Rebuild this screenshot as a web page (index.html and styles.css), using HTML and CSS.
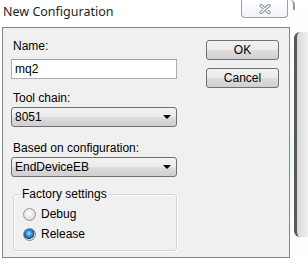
FILE: index.html
```html
<!DOCTYPE html>
<html lang="en">
<head>
    <meta charset="UTF-8">
    <meta name="viewport" content="width=device-width, initial-scale=1.0">
    <link rel="stylesheet" href="styles.css">
</head>
<body>
    <div class="screen">
        <div class="window">
            <div class="titlebar">
                <div class="title">New Configuration</div>
                <div class="close">
                    <svg viewBox="0 0 12 10" width="12" height="10">
                        <path d="M2,1.5 L10,8.5 M10,1.5 L2,8.5" stroke="#7d8896" stroke-width="3.2" stroke-linecap="round"/>
                        <path d="M2,1.5 L10,8.5 M10,1.5 L2,8.5" stroke="#fff" stroke-width="1.4" stroke-linecap="round"/>
                    </svg>
                </div>
            </div>
            <div class="client">
                <div class="form">
                    <div class="label first">Name:</div>
                    <div class="textbox">mq2</div>

                    <div class="label">Tool chain:</div>
                    <div class="combo">
                        <span>8051</span>
                        <span class="arrow"></span>
                    </div>

                    <div class="label">Based on configuration:</div>
                    <div class="combo">
                        <span>EndDeviceEB</span>
                        <span class="arrow"></span>
                    </div>

                    <fieldset class="group">
                        <legend>Factory settings</legend>
                        <div class="radio-row">
                            <span class="radio"></span>
                            <span>Debug</span>
                        </div>
                        <div class="radio-row">
                            <span class="radio checked"></span>
                            <span>Release</span>
                        </div>
                    </fieldset>
                </div>
                <div class="buttons">
                    <div class="button">OK</div>
                    <div class="button">Cancel</div>
                </div>
            </div>
        </div>
        <div class="behind">
            <div class="frame-corner"></div>
            <div class="side-window"></div>
        </div>
    </div>
</body>
</html>
```

FILE: styles.css
```css
body {
    margin: 0;
    background: #fff;
    font-family: 'Liberation Sans', Arial, sans-serif;
    font-size: 12px;
    color: #000;
}
.screen {
    display: flex;
    width: 308px;
    height: 265px;
    overflow: hidden;
}
.window {
    width: 290px;
    display: flex;
    flex-direction: column;
}
.titlebar {
    height: 27px;
    display: flex;
    justify-content: space-between;
    align-items: flex-start;
}
.title {
    font-family: 'Noto Sans', 'Open Sans', sans-serif;
    font-size: 12.5px;
    padding: 3px 0 0 3px;
    color: #1e1e1e;
}
.close {
    width: 45px;
    height: 17px;
    margin-right: 2px;
    border: 1px solid #9aa0a8;
    border-top: none;
    border-radius: 0 0 4px 4px;
    background: linear-gradient(180deg, #ffffff 0%, #f1f4f7 100%);
    display: flex;
    justify-content: center;
    align-items: center;
}
.client {
    margin-left: 2px;
    height: 229px;
    border: 1px solid #858585;
    background: #f0f0f0;
    display: flex;
    justify-content: space-between;
}
.form {
    width: 166px;
    padding-left: 8px;
    display: flex;
    flex-direction: column;
}
.label {
    line-height: 14px;
    padding-left: 2px;
    margin-top: 12px;
    margin-bottom: 2px;
}
.label.first {
    margin-top: 11px;
    margin-bottom: 6px;
}
.textbox {
    height: 18px;
    line-height: 18px;
    border: 1px solid #abadb3;
    border-top-color: #9a9ca3;
    background: #fff;
    padding-left: 3px;
}
.combo {
    height: 18px;
    border: 1px solid #707070;
    border-radius: 3px;
    background: linear-gradient(180deg, #f2f2f2 0%, #ebebeb 48%, #dddddd 52%, #cfcfcf 100%);
    display: flex;
    justify-content: space-between;
    align-items: center;
    padding: 0 5px 0 3px;
}
.combo + .label {
    margin-top: 14px;
}
.arrow {
    width: 0;
    height: 0;
    border-left: 4px solid transparent;
    border-right: 4px solid transparent;
    border-top: 4px solid #000;
}
.group {
    margin: 10px 0 0 2px;
    padding: 3px 6px 6px 7px;
    border: 1px solid #d5d5d5;
    border-radius: 3px;
    box-shadow: inset 1px 1px 0 #fff, 1px 1px 0 #fff;
}
.group legend {
    padding: 0 1px;
    line-height: 14px;
}
.radio-row {
    height: 20px;
    display: flex;
    align-items: center;
    gap: 5px;
    padding-left: 2px;
}
.radio {
    width: 11px;
    height: 11px;
    border: 1px solid #949494;
    border-radius: 50%;
    background: radial-gradient(circle at 45% 40%, #ffffff 0%, #e6e6e6 50%, #c8c8c8 100%);
}
.radio.checked {
    border-color: #7e8b99;
    background: radial-gradient(circle at 45% 40%, #9ee2ff 0%, #2d8ad0 35%, #1b4f82 60%, #dfe6ec 64%, #c9d3dc 100%);
}
.buttons {
    padding: 12px 10px 0 0;
    display: flex;
    flex-direction: column;
    gap: 8px;
}
.button {
    width: 71px;
    height: 18px;
    border: 1px solid #707070;
    border-radius: 3px;
    background: linear-gradient(180deg, #f2f2f2 0%, #ebebeb 48%, #dddddd 52%, #cfcfcf 100%);
    text-align: center;
    line-height: 18px;
}
.behind {
    flex: 1;
    background: linear-gradient(180deg, #ffffff 0%, #eef8fb 60%, #ffffff 100%);
    display: flex;
    flex-direction: column;
}
.frame-corner {
    width: 3px;
    height: 10px;
    border-right: 2px solid #6a6a6a;
    border-top-right-radius: 8px;
    opacity: 0.7;
}
.side-window {
    margin: 22px 0 0 4px;
    height: 205px;
    border-left: 3px solid #5a5a5a;
    border-top-left-radius: 6px;
    border-bottom-left-radius: 6px;
    background: linear-gradient(90deg, #d8d8d8 0%, #f2f2f2 100%);
}
```
